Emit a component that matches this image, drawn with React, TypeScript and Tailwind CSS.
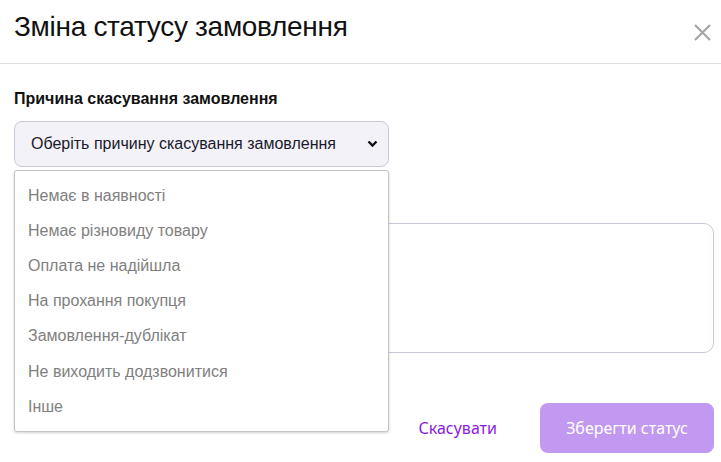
import React from "react";

const reasons = [
  "Немає в наявності",
  "Немає різновиду товару",
  "Оплата не надійшла",
  "На прохання покупця",
  "Замовлення-дублікат",
  "Не виходить додзвонитися",
  "Інше",
];

export default function App() {
  return (
    <div className="w-[721px] h-[462px] bg-white overflow-hidden relative" style={{ fontFamily: '"Liberation Sans", Arial, sans-serif' }}>
      <div className="h-[64px] border-b border-[#dedede] flex items-start justify-between pl-[14px] pr-[8px]">
        <h1 className="text-[28px] leading-none mt-[13px] text-[#111] tracking-[-0.3px]" style={{ fontFamily: '"Liberation Sans Narrow", "Liberation Sans", sans-serif' }}>Зміна статусу замовлення</h1>
        <button className="mt-[23px] mr-[1px] text-[#a5a5a5]">
          <svg width="19" height="19" viewBox="0 0 19 19" fill="none" stroke="currentColor" strokeWidth="2.2">
            <path d="M2 2 L17 17 M17 2 L2 17" />
          </svg>
        </button>
      </div>
      <div className="pl-[14px] pr-[7px] pt-[25px] relative">
        <div className="text-[16px] font-bold text-[#111] leading-[19px]">Причина скасування замовлення</div>
        <div className="mt-[13px] w-[375px] h-[46px] rounded-[8px] bg-[#f3f2f9] border border-[#c9c7db] flex items-center justify-between pl-[16px] pr-[10px]">
          <span className="text-[16px] text-[#1a1a2a]">Оберіть причину скасування замовлення</span>
          <svg width="11" height="8" viewBox="0 0 11 8"><path d="M1.5 1.5 L5.5 5.5 L9.5 1.5" fill="none" stroke="#111" strokeWidth="2.4" /></svg>
        </div>
        <div className="mt-[32px] text-[15px] text-[#111] leading-[18px]">Коментар</div>
        <div className="mt-[6px] h-[130px] w-[700px] rounded-[10px] border border-[#c9c7db]"></div>
        <div className="mt-[50px] flex justify-end items-center gap-[43px]" style={{ fontFamily: '"Noto Sans", sans-serif' }}>
          <button className="text-[16px] text-[#8a1ce2]">Скасувати</button>
          <button className="w-[174px] h-[50px] rounded-[8px] bg-[#c299f0] text-white text-[16px]">Зберегти статус</button>
        </div>
        <div className="absolute left-[14px] top-[106px] w-[375px] h-[262px] bg-white border border-[#c4c4c4] rounded-[3px] shadow-[0_1px_3px_rgba(0,0,0,0.18)] pt-[7px]">
          {reasons.map((r) => (
            <div key={r} className="h-[35.2px] flex items-center pl-[13px] text-[16px] text-[#808080]">{r}</div>
          ))}
        </div>
      </div>
    </div>
  );
}
